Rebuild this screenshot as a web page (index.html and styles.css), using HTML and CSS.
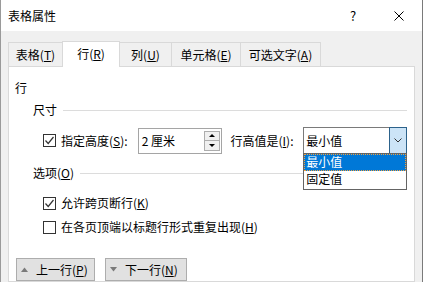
FILE: index.html
```html
<!DOCTYPE html>
<html lang="zh-CN">
<head>
  <meta charset="UTF-8">
  <title>表格属性</title>
  <link rel="stylesheet" href="styles.css">
</head>
<body>
  <div class="window">
    <div class="titlebar">
      <span class="title">表格属性</span>
      <span class="cap-btn help">?</span>
      <span class="cap-btn close">
        <svg width="10" height="10" viewBox="0 0 10 10"><path d="M0.5 0.5 L9.5 9.5 M9.5 0.5 L0.5 9.5" stroke="#000" stroke-width="1" fill="none"/></svg>
      </span>
    </div>
    <div class="dialog">
      <div class="tabs">
        <div class="tab t1">表格(<u>T</u>)</div>
        <div class="tab t2 active">行(<u>R</u>)</div>
        <div class="tab t3">列(<u>U</u>)</div>
        <div class="tab t4">单元格(<u>E</u>)</div>
        <div class="tab t5">可选文字(<u>A</u>)</div>
      </div>
      <div class="panel">
        <div class="section-title">行</div>

        <div class="group">
          <div class="group-head"><span>尺寸</span><i class="rule"></i></div>
          <div class="row size-row">
            <span class="check">
              <svg width="11" height="11" viewBox="0 0 11 11"><path d="M1.5 5.5 L4.2 8.5 L9.5 2" stroke="#333" stroke-width="1.2" fill="none"/></svg>
            </span>
            <span class="lbl lbl-height">指定高度(<u>S</u>):</span>
            <div class="spin">
              <span class="spin-value">2 厘米</span>
              <div class="spin-btns">
                <span class="spin-btn"><i class="tri-up"></i></span>
                <span class="spin-btn"><i class="tri-down"></i></span>
              </div>
            </div>
            <span class="lbl lbl-rule">行高值是(<u>I</u>):</span>
            <div class="select">
              <span class="select-value">最小值</span>
              <span class="drop-btn">
                <svg width="8" height="5" viewBox="0 0 8 5"><path d="M0.5 0.5 L4 4 L7.5 0.5" stroke="#333" stroke-width="1" fill="none"/></svg>
              </span>
              <ul class="drop-list">
                <li class="selected"><span>最小值</span></li>
                <li><span>固定值</span></li>
              </ul>
            </div>
          </div>
        </div>

        <div class="group options">
          <div class="group-head"><span>选项(<u>O</u>)</span><i class="rule"></i></div>
          <div class="row opt-row first">
            <span class="check">
              <svg width="11" height="11" viewBox="0 0 11 11"><path d="M1.5 5.5 L4.2 8.5 L9.5 2" stroke="#333" stroke-width="1.2" fill="none"/></svg>
            </span>
            <span class="lbl">允许跨页断行(<u>K</u>)</span>
          </div>
          <div class="row opt-row">
            <span class="check"></span>
            <span class="lbl">在各页顶端以标题行形式重复出现(<u>H</u>)</span>
          </div>
        </div>

        <div class="nav-btns">
          <button class="nav-btn prev">
            <svg width="7" height="5" viewBox="0 0 7 5"><path d="M0 5 L3.5 0.5 L7 5 Z" fill="#7a7a7a"/></svg>
            <span>上一行(<u>P</u>)</span>
          </button>
          <button class="nav-btn next">
            <svg width="7" height="5" viewBox="0 0 7 5"><path d="M0 0 L7 0 L3.5 4.5 Z" fill="#7a7a7a"/></svg>
            <span>下一行(<u>N</u>)</span>
          </button>
        </div>
      </div>
    </div>
  </div>
</body>
</html>
```

FILE: styles.css
```css
* {
  box-sizing: border-box;
}
body {
  margin: 0;
  width: 423px;
  height: 282px;
  overflow: hidden;
  background: #fff;
  font-family: "Noto Sans CJK SC", "Microsoft YaHei UI", sans-serif;
  font-size: 12px;
  line-height: 16px;
  color: #000;
}
u {
  text-decoration: underline;
  text-underline-offset: 1px;
}
.window {
  width: 423px;
  height: 282px;
  border-left: 1px solid #9a9a9a;
  border-right: 1px solid #7a7a7a;
  display: flex;
  flex-direction: column;
}
.titlebar {
  height: 31px;
  display: flex;
  align-items: center;
  padding-left: 7px;
  background: #fff;
  flex-shrink: 0;
}
.title {
  flex: 1;
}
.cap-btn {
  width: 46px;
  height: 31px;
  display: flex;
  align-items: center;
  justify-content: center;
}
.help {
  font-size: 13px;
}
.dialog {
  flex: 1;
  background: #f0f0f0;
  padding: 10px 7px 0 7px;
  display: flex;
  flex-direction: column;
}
.tabs {
  height: 25px;
  display: flex;
  align-items: flex-end;
  flex-shrink: 0;
}
.tab {
  height: 24px;
  border: 1px solid #d9d9d9;
  border-bottom: none;
  background: #f0f0f0;
  display: flex;
  align-items: center;
  justify-content: center;
  margin-left: -1px;
}
.tab.t1 { width: 55px; margin-left: 0; }
.tab.t2 { width: 58px; }
.tab.t3 { width: 53px; }
.tab.t4 { width: 70px; }
.tab.t5 { width: 81px; }
.tab.active {
  height: 26px;
  margin-bottom: -1px;
  background: #fff;
  position: relative;
  z-index: 1;
  padding-bottom: 2px;
}
.panel {
  flex: 1;
  background: #fff;
  border: 1px solid #d9d9d9;
  padding: 13px 7px 0 6px;
}
.section-title {
  height: 16px;
}
.group {
  margin-left: 18px;
}
.group-head {
  margin-top: 6px;
  height: 16px;
  display: flex;
  align-items: center;
}
.rule {
  flex: 1;
  height: 1px;
  background: #dcdcdc;
  margin-left: 6px;
}
.row {
  display: flex;
  align-items: center;
  padding-left: 10px;
}
.size-row {
  margin-top: 9px;
  height: 27px;
}
.check {
  width: 13px;
  height: 13px;
  border: 1px solid #333;
  background: #fff;
  display: flex;
  align-items: center;
  justify-content: center;
  flex-shrink: 0;
}
.lbl {
  margin-left: 5px;
  white-space: nowrap;
}
.lbl-height {
  width: 77px;
}
.lbl-rule {
  margin-left: 9px;
  width: 73px;
}
.spin {
  width: 84px;
  height: 26px;
  border: 1px solid #a5a5a5;
  display: flex;
  align-items: center;
  background: #fff;
}
.spin-value {
  flex: 1;
  padding-left: 3px;
}
.spin-btns {
  align-self: flex-start;
  margin: 2px 1px 0 0;
  display: flex;
  flex-direction: column;
}
.spin-btn {
  width: 16px;
  height: 10px;
  border: 1px solid #adadad;
  background: #f0f0f0;
  display: flex;
  align-items: center;
  justify-content: center;
}
.spin-btn + .spin-btn {
  border-top: none;
}
.tri-up, .tri-down {
  width: 0;
  height: 0;
  border-left: 3px solid transparent;
  border-right: 3px solid transparent;
}
.tri-up {
  border-bottom: 3px solid #000;
}
.tri-down {
  border-top: 3px solid #000;
}
.select {
  width: 104px;
  height: 27px;
  border: 1px solid #7a7a7a;
  display: flex;
  align-items: center;
  position: relative;
  background: #fff;
}
.select-value {
  flex: 1;
  padding-left: 2px;
}
.drop-btn {
  width: 18px;
  height: 27px;
  margin: -1px -1px -1px 0;
  border: 1px solid #2c628b;
  background: #cce4f7;
  display: flex;
  align-items: center;
  justify-content: center;
}
.drop-list {
  position: absolute;
  top: 100%;
  left: -1px;
  width: 104px;
  margin: 0;
  padding: 0 0 1px 0;
  list-style: none;
  border: 1px solid #646464;
  background: #fff;
  z-index: 2;
}
.drop-list li {
  height: 17px;
  line-height: 16px;
  padding-left: 2px;
}
.drop-list li.selected {
  background: #0078d7;
  color: #fff;
  outline: 1px dotted #f0a040;
  outline-offset: -1px;
}
.options .group-head {
  margin-top: 11px;
}
.opt-row {
  height: 20px;
  margin-top: 4px;
}
.opt-row.first {
  margin-top: 12px;
}
.nav-btns {
  margin-top: 21px;
  margin-left: 1px;
  display: flex;
  gap: 10px;
}
.nav-btn {
  height: 23px;
  border: 1px solid #adadad;
  background: #e1e1e1;
  font: inherit;
  color: #000;
  display: flex;
  align-items: center;
  padding: 0 0 0 4px;
}
.nav-btn svg {
  margin-right: 8px;
}
.nav-btn.prev {
  width: 79px;
}
.nav-btn.next {
  width: 82px;
}
```
